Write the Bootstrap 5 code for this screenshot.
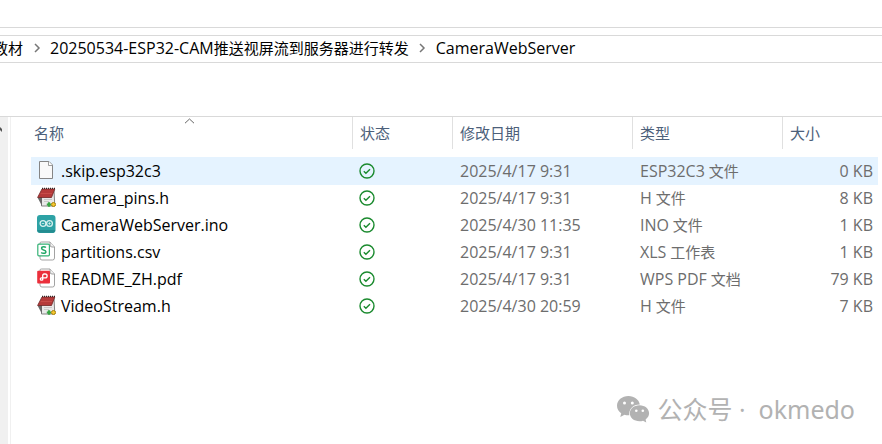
<!DOCTYPE html>
<html lang="zh-CN">
<head>
<meta charset="utf-8">
<meta name="viewport" content="width=device-width, initial-scale=1">
<title>CameraWebServer</title>
<link href="https://cdn.jsdelivr.net/npm/bootstrap@5.3.0/dist/css/bootstrap.min.css" rel="stylesheet">
<style>
body{font-family:"Open Sans","Noto Sans CJK SC",sans-serif;font-size:15px;line-height:20px;color:#000;background:#fff}
.ribbon-strip{height:28px;border-bottom:1px solid #d9d9d9}
.address-bar{margin-top:7px;height:28px;padding-bottom:2px;border-top:1px solid #d9d9d9;border-bottom:1px solid #d9d9d9;overflow:hidden}
.address-bar a{color:#000;text-decoration:none;white-space:nowrap}
.address-bar .cut-crumb{margin-left:-7px}
.latin,.file-table .latin{font-size:16px}
.crumb-sep{width:27px;text-align:center;flex:none;line-height:0}
.tool-strip{height:53px}
.file-area{border-top:1px solid #d9d9d9}
.nav-rail{width:8px;background:#f0f0f0;flex:none;overflow:hidden}
.nav-rail svg{display:block;margin-top:10px}
.file-pane{border-left:1px solid #f0f0f0;margin-left:2px;padding-left:20px;padding-right:4px;min-width:0}
.file-table{table-layout:fixed;width:100%;border-collapse:separate;border-spacing:0}
.file-table th{font-weight:400;color:#4c607a;height:32px;padding:0 7px;border-right:1px solid #e0e0e0;position:relative}
.file-table th:first-child{padding-left:3px}
.file-table th:last-child{border-right:0}
.sort-mark{position:absolute;left:50%;top:1px;margin-left:-8px}
.file-table .gap-row td{height:8px;padding:0}
.file-table td{height:27px;padding:0 7px;color:#6d6d6d;white-space:nowrap}
.file-table td:first-child{padding-left:6px}
.file-table td:nth-child(2){padding-left:6px}
.file-table td:last-child{padding-right:5px}
.file-table td svg{display:block;flex:none}
.file-table td:first-child svg{margin-bottom:2px}
.file-table a{color:#000;text-decoration:none}
.is-hovered td{background:#e5f3ff;box-shadow:0 1px 0 #e5f3ff}
.col-name{width:322px}.col-state{width:100px}.col-date{width:180px}.col-type{width:150px}
.account-tag{color:#b2b2b2;font-family:"Open Sans","Noto Sans CJK SC",sans-serif;font-size:25px;line-height:32px;padding:0 23px 19px 0}
.account-tag svg{margin-right:7px}
.account-tag .account-name{font-family:"Noto Sans","Noto Sans CJK SC",sans-serif;margin-left:13px}
</style>
<script src="https://cdn.jsdelivr.net/npm/bootstrap@5.3.0/dist/js/bootstrap.bundle.min.js" defer></script>
</head>
<body>
<svg class="d-none" aria-hidden="true">
  <symbol id="i-sep" viewBox="0 0 8 10"><path d="M2 1l4 4-4 4" fill="none" stroke="#777" stroke-width="1.5"/></symbol>
  <symbol id="i-ok" viewBox="0 0 16 16"><circle cx="8" cy="8" r="7" fill="none" stroke="#1a8a2e" stroke-width="1.4"/><path d="M4.8 8.2l2.1 2 4.1-4" fill="none" stroke="#1a8a2e" stroke-width="1.4"/></symbol>
  <symbol id="i-blank" viewBox="0 0 20 20"><path d="M2.500 1.500h9.500l3.500 3.500V18.500H2.500z" fill="#f9f9f9" stroke="#858585"/><path d="M11.500 1.500V5.500h4" fill="#fff" stroke="#858585" stroke-width=".8"/></symbol>
  <symbol id="i-h" viewBox="0 0 20 20"><path d="M4.500 9l12.500-6 .8 16H4.500z" fill="#e9e9e9" stroke="#777" stroke-width=".9"/><path d="M.8 11L5 9.500v9.500z" fill="#686868"/><path d="M7 12.500h8M7 14.500h5" stroke="#bbb" stroke-width=".7"/><path d="M5 2h12.800l-3.300 8.500H.6z" fill="#b53a3a" stroke="#702525" stroke-width=".8"/><path d="M5 1.300h13" stroke="#342626" stroke-width="1.200" stroke-dasharray="1 1"/><path d="M3.500 6.500h11.500" stroke="#cb514d" stroke-width=".8"/><path d="M12 15.300v4.400M9.800 17.500h4.400" stroke="#36a643" stroke-width="2.200"/><path d="M16.500 15v5M14 17.500h5" stroke="#927514" stroke-width="2.400"/><path d="M16.500 15.400v4.200M14.400 17.500h4.200" stroke="#f5c62c" stroke-width="1.700"/></symbol>
  <symbol id="i-ino" viewBox="0 0 20 20"><rect x="0" y="1" width="18.500" height="18" rx="3" fill="#2da2a5"/><path d="M.3 16a3 3 0 003 2.800H15A3 3 0 0018.200 16" fill="#238c90"/><g fill="none" stroke="#d9f1ef" stroke-width="1.300"><circle cx="6" cy="9.500" r="2.900"/><circle cx="12.500" cy="9.500" r="2.900"/></g><path d="M4.800 9.500h2.400M11.300 9.500h2.400M12.500 8.300v2.400" stroke="#d9f1ef" stroke-width=".8"/></symbol>
  <symbol id="i-page" viewBox="0 0 20 20"><path d="M4.500 1h8.500l4.500 5v11q0 2-2 2H5q-2 0-2-2V2q0-1 1.500-1z" fill="#fff" stroke="#999" stroke-width=".9"/><path d="M13 1v3q0 2 2 2h2.500" fill="#eee" stroke="#999" stroke-width=".9"/></symbol>
</svg>
<div class="d-flex flex-column min-vh-100">
  <div class="ribbon-strip"></div>
  <nav class="address-bar d-flex align-items-center" aria-label="路径">
    <a href="#" class="cut-crumb">教材</a>
    <span class="crumb-sep"><svg width="8" height="10"><use href="#i-sep"/></svg></span>
    <a href="#"><span class="latin">20250534-ESP32-CAM</span>推送视屏流到服务器进行转发</a>
    <span class="crumb-sep"><svg width="8" height="10"><use href="#i-sep"/></svg></span>
    <a href="#" class="latin">CameraWebServer</a>
  </nav>
  <div class="tool-strip"></div>
  <main class="file-area d-flex flex-grow-1">
    <div class="nav-rail"><svg width="3" height="6" viewBox="0 0 3 6"><path d="M0 0l2 2v3L0 3z" fill="#555"/></svg></div>
    <div class="file-pane d-flex flex-column flex-grow-1">
      <table class="file-table">
        <colgroup><col class="col-name"><col class="col-state"><col class="col-date"><col class="col-type"><col></colgroup>
        <thead><tr>
          <th scope="col" aria-sort="ascending">名称<svg class="sort-mark" width="11" height="6" viewBox="0 0 11 6"><path d="M1 5.200L5.500 1 10 5.200" fill="none" stroke="#666"/></svg></th>
          <th scope="col">状态</th><th scope="col">修改日期</th><th scope="col">类型</th><th scope="col">大小</th>
        </tr></thead>
        <tbody>
          <tr class="gap-row" aria-hidden="true"><td colspan="5"></td></tr>
          <tr class="is-hovered"><td><div class="d-flex align-items-center gap-1"><svg width="20" height="20"><use href="#i-blank"/></svg><a href="#" class="latin">.skip.esp32c3</a></div></td><td><svg width="16" height="16" role="img" aria-label="已同步"><use href="#i-ok"/></svg></td><td class="latin">2025/4/17 9:31</td><td><span class="latin">ESP32C3</span> 文件</td><td class="latin text-end">0 KB</td></tr>
          <tr><td><div class="d-flex align-items-center gap-1"><svg width="20" height="20"><use href="#i-h"/></svg><a href="#" class="latin">camera_pins.h</a></div></td><td><svg width="16" height="16" role="img" aria-label="已同步"><use href="#i-ok"/></svg></td><td class="latin">2025/4/17 9:31</td><td><span class="latin">H</span> 文件</td><td class="latin text-end">8 KB</td></tr>
          <tr><td><div class="d-flex align-items-center gap-1"><svg width="20" height="20"><use href="#i-ino"/></svg><a href="#" class="latin">CameraWebServer.ino</a></div></td><td><svg width="16" height="16" role="img" aria-label="已同步"><use href="#i-ok"/></svg></td><td class="latin">2025/4/30 11:35</td><td><span class="latin">INO</span> 文件</td><td class="latin text-end">1 KB</td></tr>
          <tr><td><div class="d-flex align-items-center gap-1"><svg width="20" height="20" viewBox="0 0 20 20"><use href="#i-page"/><rect x=".8" y="3.200" width="11.600" height="11.600" rx="1" fill="#fff" stroke="#35b276" stroke-width="1.200"/><path d="M8.900 6.500Q8.100 5.700 6.600 5.700 4.600 5.700 4.600 7.300 4.600 8.500 6.600 8.900 8.900 9.300 8.900 10.700 8.900 12.300 6.600 12.300 5 12.300 4.200 11.400" fill="none" stroke="#20a766" stroke-width="1.500"/></svg><a href="#" class="latin">partitions.csv</a></div></td><td><svg width="16" height="16" role="img" aria-label="已同步"><use href="#i-ok"/></svg></td><td class="latin">2025/4/17 9:31</td><td><span class="latin">XLS</span> 工作表</td><td class="latin text-end">1 KB</td></tr>
          <tr><td><div class="d-flex align-items-center gap-1"><svg width="20" height="20" viewBox="0 0 20 20"><use href="#i-page"/><rect x=".2" y="2.800" width="12.800" height="12.800" rx="1" fill="#eb2f3b"/><path d="M5.700 12.300V7.500Q5.700 6 7.200 6H8.200a1.900 1.900 0 010 3.800H4.500a1.200 1.200 0 000 2.400h1.200" fill="none" stroke="#fff" stroke-width="1.300"/></svg><a href="#" class="latin">README_ZH.pdf</a></div></td><td><svg width="16" height="16" role="img" aria-label="已同步"><use href="#i-ok"/></svg></td><td class="latin">2025/4/17 9:31</td><td><span class="latin">WPS PDF</span> 文档</td><td class="latin text-end">79 KB</td></tr>
          <tr><td><div class="d-flex align-items-center gap-1"><svg width="20" height="20"><use href="#i-h"/></svg><a href="#" class="latin">VideoStream.h</a></div></td><td><svg width="16" height="16" role="img" aria-label="已同步"><use href="#i-ok"/></svg></td><td class="latin">2025/4/30 20:59</td><td><span class="latin">H</span> 文件</td><td class="latin text-end">7 KB</td></tr>
        </tbody>
      </table>
      <div class="account-tag d-flex align-items-center justify-content-end mt-auto">
        <svg width="33" height="27" viewBox="0 0 33 27" aria-hidden="true"><path d="M11.500 0C5 0 0 4.300 0 9.700c0 3 1.600 5.700 4.200 7.500L3.300 21l4.200-2.300c1.500.4 3 .6 4.800.5-.9-6 4-11 10.500-10.800C22 3.600 17.300 0 11.500 0z" fill="#b2b2b2"/><path d="M22.500 9.300c-5.500 0-9.700 3.600-9.700 8s4.200 8 9.700 8c1.300 0 2.500-.2 3.500-.6l3.300 1.900-.7-3.200c2.200-1.500 3.500-3.700 3.500-6.100 0-4.400-4.200-8-9.600-8z" fill="#b2b2b2"/><g fill="#fff"><circle cx="7.500" cy="7" r="1.500"/><circle cx="15.300" cy="7" r="1.500"/><circle cx="19.300" cy="14.800" r="1.300"/><circle cx="25.800" cy="14.800" r="1.300"/></g></svg>
        <span>公众号 ·</span><span class="account-name">okmedo</span>
      </div>
    </div>
  </main>
</div>
</body>
</html>
